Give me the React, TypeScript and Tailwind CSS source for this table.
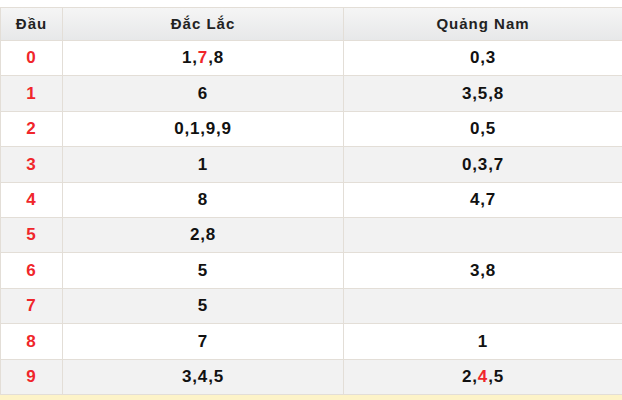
import React from "react";

type Cell = (string | { r: string })[];

const rows: { d: string; a: Cell; b: Cell }[] = [
  { d: "0", a: ["1,", { r: "7" }, ",8"], b: ["0,3"] },
  { d: "1", a: ["6"], b: ["3,5,8"] },
  { d: "2", a: ["0,1,9,9"], b: ["0,5"] },
  { d: "3", a: ["1"], b: ["0,3,7"] },
  { d: "4", a: ["8"], b: ["4,7"] },
  { d: "5", a: ["2,8"], b: [] },
  { d: "6", a: ["5"], b: ["3,8"] },
  { d: "7", a: ["5"], b: [] },
  { d: "8", a: ["7"], b: ["1"] },
  { d: "9", a: ["3,4,5"], b: ["2,", { r: "4" }, ",5"] },
];

function renderCell(c: Cell) {
  return c.map((p, i) =>
    typeof p === "string" ? (
      <span key={i}>{p}</span>
    ) : (
      <span key={i} className="text-[#f0262b]">
        {p.r}
      </span>
    )
  );
}

export default function App() {
  return (
    <div
      className="w-[622px] h-[400px] overflow-hidden bg-white pt-[7px]"
      style={{ fontFamily: '"Liberation Sans", Arial, sans-serif' }}
    >
      <div className="border-l border-[#e3ded7]">
        <div className="grid grid-cols-[62px_281px_1fr] h-[34px] border-y border-[#e3ded7] bg-gradient-to-b from-[#f5f5f5] to-[#e7e8e9] text-[15px] tracking-[1px] font-bold text-[#222]">
          <div className="flex items-center justify-center border-r border-[#e3ded7]">Đầu</div>
          <div className="flex items-center justify-center border-r border-[#e3ded7]">Đắc Lắc</div>
          <div className="flex items-center justify-center">Quảng Nam</div>
        </div>
        {rows.map((row, i) => (
          <div
            key={row.d}
            className={`grid grid-cols-[62px_281px_1fr] h-[35.4px] border-b border-[#e3ded7] font-bold text-[17px] tracking-[0.8px] ${
              i % 2 === 0 ? "bg-white" : "bg-[#f2f2f2]"
            }`}
          >
            <div className="flex items-center justify-center border-r border-[#e3ded7] text-[#f0262b]">
              {row.d}
            </div>
            <div className="flex items-center justify-center border-r border-[#e3ded7] text-[#111]">
              {renderCell(row.a)}
            </div>
            <div className="flex items-center justify-center text-[#111]">{renderCell(row.b)}</div>
          </div>
        ))}
      </div>
      <div className="h-[10px] bg-[#fdf3c8]" />
    </div>
  );
}
